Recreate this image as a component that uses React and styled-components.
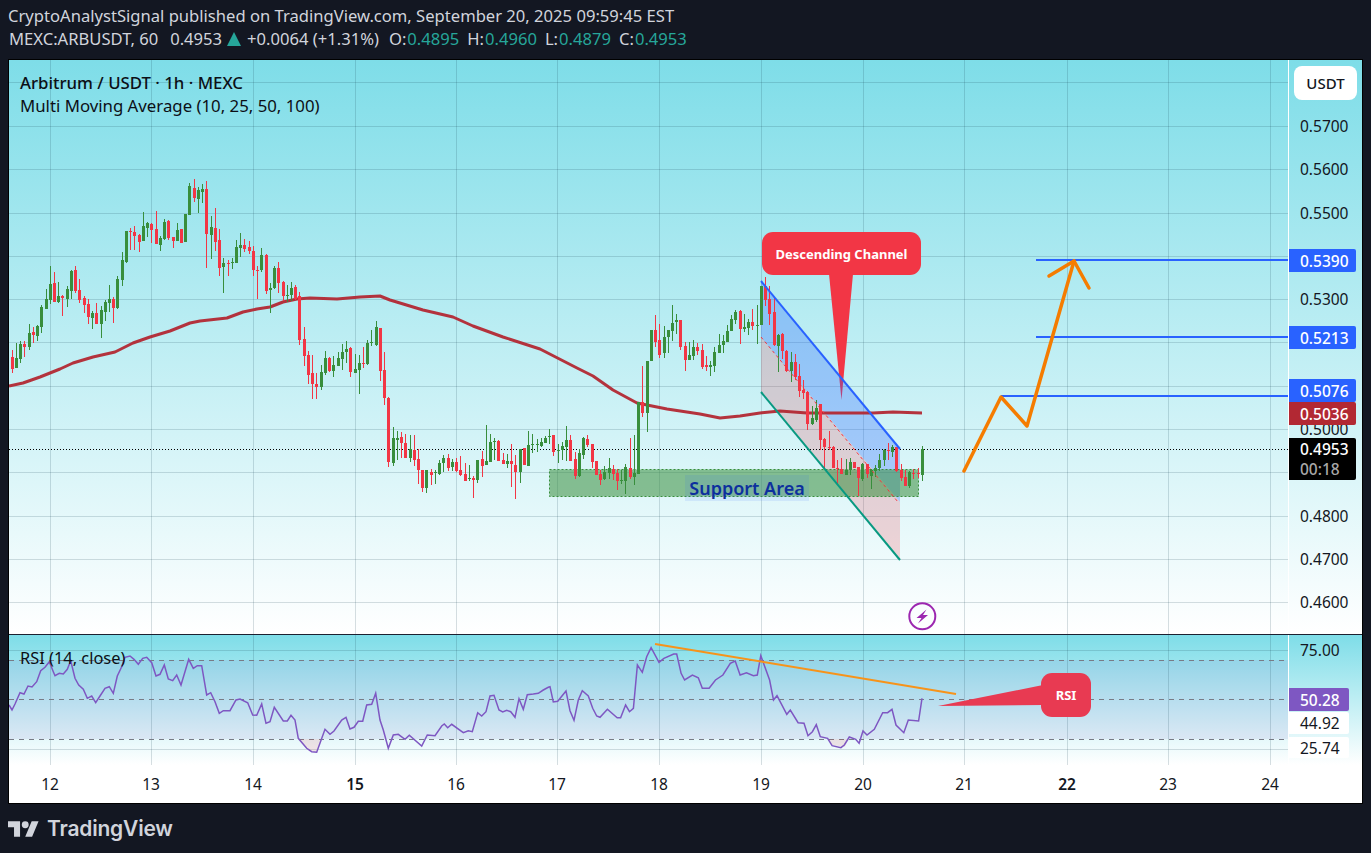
import React from "react";
import styled, { createGlobalStyle } from "styled-components";

const GlobalStyle = createGlobalStyle`
    html, body {
        margin: 0;
        padding: 0;
        background: #131722;
    }
    body {
        font-family: "Noto Sans", "Open Sans", sans-serif;
    }
`;

const Page = styled.div`
    width: 1371px;
    height: 853px;
    display: flex;
    flex-direction: column;
    background: #131722;
    overflow: hidden;
`;

const Header = styled.header`
    height: 59px;
    box-sizing: border-box;
    padding: 4px 0 0 8px;
    color: #d1d4dc;
    font-size: 16.6px;
    line-height: 23px;
    white-space: nowrap;
`;

const Line = styled.div`
    display: flex;
    align-items: center;
`;

const Value = styled.span`
    color: #26a69a;
    margin: 0 8px 0 1px;
`;

const Quote = styled.span`
    margin-left: ${(p) => p.$left || 0}px;
`;

const UpArrow = styled.span`
    width: 0;
    height: 0;
    margin: 0 6px 0 5px;
    border-left: 7px solid transparent;
    border-right: 7px solid transparent;
    border-bottom: 14px solid #26a69a;
`;

const Frame = styled.div`
    width: 1353px;
    margin-left: 8px;
    border: 1px solid #000;
    display: flex;
    flex-direction: column;
`;

const Pane = styled.div`
    height: ${(p) => p.$height}px;
    display: grid;
    grid-template-columns: 1279px 74px;
    background: linear-gradient(#7edde8, #ffffff);
`;

const PaneRule = styled.div`
    height: 1px;
    background: #1c2030;
`;

const ChartArea = styled.div`
    position: relative;
    overflow: hidden;
    svg {
        display: block;
    }
`;

const Axis = styled.div`
    position: relative;
    border-left: 1px solid #ffffff;
    box-sizing: border-box;
    color: #131722;
    font-size: 15.5px;
`;

const Legend = styled.div`
    position: absolute;
    top: ${(p) => p.$top}px;
    left: 11px;
    color: #0c0f16;
    font-size: ${(p) => p.$size || 16.8}px;
    line-height: 23px;
    white-space: nowrap;
`;

const LegendTitle = styled.div`
    font-weight: 500;
`;

const UnitButton = styled.div`
    position: absolute;
    top: 6px;
    left: 5px;
    width: 63px;
    height: 34px;
    display: flex;
    align-items: center;
    justify-content: center;
    background: #fff;
    border-radius: 8px;
    font-size: 15px;
    font-weight: 500;
`;

const Tick = styled.div`
    position: absolute;
    top: ${(p) => p.$y}px;
    left: 11px;
    transform: translateY(-50%);
`;

const Tag = styled.div`
    position: absolute;
    top: ${(p) => p.$top}px;
    left: 0;
    width: ${(p) => p.$width || 67}px;
    height: ${(p) => p.$height || 23}px;
    box-sizing: border-box;
    padding-left: 11px;
    display: flex;
    flex-direction: column;
    justify-content: center;
    border-radius: 0 2px 2px 0;
    background: ${(p) => p.$bg};
    color: ${(p) => p.$color || "#fff"};
    font-weight: ${(p) => (p.$color ? 400 : 500)};
    line-height: 20px;
`;

const Countdown = styled.span`
    color: #a8a8a8;
`;

const Callout = styled.div`
    position: absolute;
    left: ${(p) => p.$left}px;
    top: ${(p) => p.$top}px;
    width: ${(p) => p.$width}px;
    height: ${(p) => p.$height}px;
    display: flex;
    align-items: center;
    justify-content: center;
    border-radius: 11px;
    background: ${(p) => p.$bg};
    color: #fff;
    font-size: 13px;
    font-weight: 700;
`;

const ZoneLabel = styled.div`
    position: absolute;
    left: 676px;
    top: 415px;
    width: 124px;
    height: 26px;
    display: flex;
    align-items: center;
    justify-content: center;
    background: rgba(41, 98, 255, 0.1);
    color: #0d2f9e;
    font-size: 18px;
    font-weight: 600;
`;

const TimeRow = styled.div`
    height: 38px;
    display: grid;
    grid-template-columns: 1279px 74px;
    background: #fff;
`;

const TimeScale = styled.div`
    position: relative;
    color: #131722;
    font-size: 15.5px;
`;

const TimeLabel = styled.span`
    position: absolute;
    left: ${(p) => p.$x - 9}px;
    top: 50%;
    transform: translate(-50%, -50%);
    font-weight: ${(p) => (p.$strong ? 600 : 400)};
`;

const Footer = styled.footer`
    flex: 1;
    display: flex;
    align-items: center;
    gap: 8px;
    padding-left: 8px;
    color: #d1d4dc;
`;

const Wordmark = styled.span`
    font-family: Inter, "Noto Sans", sans-serif;
    font-size: 21px;
    font-weight: 600;
    letter-spacing: -0.2px;
`;

// bars are read off 3x crops: colour, x, high, body top, body bottom, low
const barsA = `
r37 540 561 597 608,g49 519 564 594 594,g61 514 522 567 579,r73 513 521 531 561,g88 462 489 531 540,r100 472 486 495 519,g112 465 468 498 513,g124 405 411 471 489
g139 357 387 417 417,g151 288 342 390 402,r163 306 339 396 396,g175 336 378 396 399,r187 375 378 384 438,g202 348 357 387 411,g214 300 303 363 387,r226 288 300 363 369
r238 327 360 390 399,r253 378 384 405 429,r265 387 402 441 462,g277 423 429 444 477,r289 399 429 462 462,g304 408 420 462 504,g316 390 396 426 453,g328 345 387 399 426
r340 381 387 414 459,g352 318 327 414 417,g367 246 270 330 348,g379 183 183 276 279,r391 174 183 186 240,r403 168 186 198 240,r418 192 195 216 246,g430 126 168 213 213
g442 156 159 174 201,r454 159 162 180 219,r469 123 177 222 222,g481 198 204 225 243,g493 147 156 207 210,r505 150 153 204 210,r520 201 201 213 234,g532 159 180 213 213
r544 177 177 219 219,g556 132 132 216 216,g568 39 48 135 135,r583 27 54 84 96,g595 51 60 87 129,g607 42 57 66 99,r619 33 57 192 294,g634 138 171 195 267
r646 114 174 216 243,r658 177 210 294 318,g670 264 279 291 369,r685 270 279 282 318,g697 264 276 279 297,g709 210 231 279 279,g721 189 225 234 261,r733 207 225 237 246
r748 213 231 243 252,r760 228 243 300 318,r772 288 300 303 387,g784 234 255 300 306,r799 252 255 363 372,g811 339 354 360 429,g823 288 294 354 357,r835 276 294 339 369
r850 333 336 378 393,g862 345 375 378 396,g874 336 354 375 393,r886 345 351 387 390,r898 366 378 510 525,r913 471 507 558 588,r925 543 555 615 642,r937 555 609 642 687
r949 609 642 651 687,g964 585 606 651 660,g976 543 564 609 615,r988 561 564 603 606,g1000 558 585 603 621,g1015 546 564 588 588,g1027 522 546 567 600,g1039 513 537 546 579
r1051 531 534 606 621,g1066 552 597 609 609,g1078 555 579 600 672,r1090 531 579 582 594,g1102 510 519 582 585,g1114 480 516 519 528,g1129 453 471 525 528,r1141 474 474 603 633
r1153 546 600 684 705,r1165 681 684 876 891,g1180 771 804 879 888,g1192 783 804 810 870`;

const barsB = `
r64 396 411 429 474,r76 402 429 474 474,g91 405 447 474 486,r103 405 450 480 498,r115 447 477 510 552,r127 510 510 564 576,g139 510 510 564 579,r154 507 516 525 555
g166 510 516 519 552,g178 480 489 522 525,g190 465 474 489 516,r205 462 474 504 513,g217 477 486 501 513,r229 474 486 513 516,r241 468 510 525 528,r256 489 522 543 543
g268 495 534 537 543,r280 528 534 540 594,g292 480 480 540 549,r307 453 477 498 531,g319 375 483 495 495,g331 402 426 486 486,g343 414 423 426 480,r355 420 423 483 483
r370 459 480 492 492,g382 462 483 492 504,r394 432 483 492 561,r406 465 495 516 597,g421 447 447 516 549,r433 444 444 495 495,g445 393 435 498 498,g457 402 432 435 459
g472 417 432 435 456,g484 414 426 438 441,g496 408 414 429 429,g508 387 408 411 432,r520 405 405 456 468,g535 432 450 453 489,g547 426 438 450 480,g559 378 420 441 483
r571 405 420 483 483,r586 456 477 528 537,g598 447 459 528 531,g610 411 414 465 477,r622 405 417 435 441,r637 432 432 486 504,r649 483 483 525 525,r661 510 522 540 555
g673 498 516 537 540,g688 474 504 519 537,r700 495 507 522 540,r712 507 519 543 570,g724 510 540 543 552,g736 492 501 543 582,r751 414 504 531 537,g763 405 519 531 555
g775 306 306 522 522,r787 198 306 339 351,g802 183 183 339 396,g814 90 90 183 183,r826 45 90 126 141,r838 72 120 165 174,g853 78 111 159 174,g865 90 90 111 159
g877 15 69 93 123,g889 42 60 66 102,r901 60 60 141 150,r916 126 138 180 213,g928 126 165 180 180,g940 120 141 168 180,r952 129 141 153 165,r967 132 150 201 207
r979 168 195 201 213,g991 183 195 201 228,g1003 141 156 198 216,g1018 102 135 159 159,g1030 105 123 135 159,g1042 75 93 126 126,g1054 45 57 93 93,g1066 30 36 60 72
r1081 30 33 87 132,g1093 42 81 87 96,g1105 57 66 84 105,r1117 27 66 78 90,g1132 15 75 78 132`;

const barsC = `
g64 198 198 315 315,r76 171 198 240 258,r88 198 237 282 315,r103 234 276 375 378,g115 342 345 378 456,r127 339 342 393 417,r139 390 393 453 456,g154 396 426 453 486
r166 402 426 471 480,r178 432 468 513 531,r190 480 510 519 537,r202 513 516 612 630,g217 558 594 612 615,g229 540 564 600 606,r241 552 552 660 690,r253 654 657 681 744
r268 633 681 684 690,r280 678 681 744 744,r292 720 744 747 795,r304 714 747 762 762,g319 717 750 765 765,g331 714 726 750 765,r343 726 726 744 744,r355 741 741 774 828
g367 729 732 777 783,r382 732 732 762 774,g394 747 750 768 807,g406 735 744 753 771,g418 702 720 744 753,g433 687 690 720 738,r445 669 690 693 720,g457 675 681 696 711
r469 681 681 753 756,r484 732 750 774 783,r496 750 771 798 798,g508 753 756 798 804,r520 747 759 762 777,r535 744 759 762 774,g547 678 687 765 783`;

const readBars = (text, left, top) =>
    text
        .trim()
        .split(/[,\n]/)
        .map((bar) => {
            const [x, high, bodyTop, bodyBottom, low] = bar.slice(1).split(" ").map(Number);
            return {
                up: bar[0] === "g",
                x: Math.round(left + x / 3),
                high: top + high / 3,
                top: top + bodyTop / 3,
                bottom: top + bodyBottom / 3,
                low: top + low / 3,
            };
        });

const BARS = [...readBars(barsA, 0, 170), ...readBars(barsB, 380, 300), ...readBars(barsC, 740, 220)];

const MA_LINE =
    "9,386 23,383 40,377 60,369 73,363 93,357 115,352 133,343 150,337 170,331 190,323 200,321 227,318 243,312 257,309 270,307 283,302 297,299 310,298 337,299 360,297 380,296 390,300 423,310 453,317 473,326 503,337 540,349 577,368 593,376 613,390 637,403 667,409 700,414 720,418 740,416 760,413 780,411 807,413 840,413 873,413 893,412 922,413";

const rsiA =
    "27,225 36,240 45,222 60,188 72,192 84,168 96,171 110,155 122,122 135,112 148,95 160,125 165,137 178,130 190,132 202,118 212,92 225,145 236,165 250,178 262,205 275,198 287,218 300,198 315,175 328,170 340,190 352,138 365,110 375,82 390,78 402,88 415,103 428,85 440,82 455,98 468,138 480,133 493,105 505,147 518,152 530,135 543,165 566,88 580,115 592,107 605,107 620,195 632,188 645,215 658,250 670,242 690,242 708,210 720,207 743,218 758,255 770,256 785,222 798,280 810,275 823,232 850,273 862,273 873,256 885,270 895,325 920,355 935,365 950,367 975,298 990,313 1002,303 1025,270 1038,262 1050,297 1062,292 1075,274 1088,274 1100,225 1115,223 1127,190 1140,270 1150,300 1165,355 1180,315 1195,313 1215,328 1228,316 1265,348 1282,315 1305,317 1325,288 1333,282 1343,293 1355,283 1390,308 1405,302 1417,305 1433,248 1445,258 1458,245 1470,198 1482,196 1497,240";
const rsiB =
    "68,216 80,211 92,215 105,232 117,176 130,208 142,164 160,162 175,160 190,150 205,142 210,140 220,186 233,184 258,153 270,212 282,241 295,180 307,152 325,168 338,205 350,228";
const rsiC =
    "0,262 15,238 35,263 42,263 52,225 60,245 68,235 76,105 86,127 95,80 104,53 120,97 130,85 150,72 156,72 165,130 172,150 188,135 200,143 208,175 222,175 235,150 250,135 265,100 275,93 285,135 298,128 312,137 320,135 327,77 345,150 353,210 360,197 380,253 387,240 403,278 415,280 423,317 432,305 440,284 448,320 463,325 472,347 490,353 497,345 507,321 520,328 527,340 535,303 543,315 558,298 575,248 585,248 594,238 602,285 618,308 627,270 648,273 655,205";

const readLine = (text, left, top, scaleX, scaleY) =>
    text
        .split(" ")
        .map((pair) => {
            const [x, y] = pair.split(",").map(Number);
            return `${(left + x / scaleX).toFixed(1)},${(top + y / scaleY).toFixed(1)}`;
        })
        .join(" ");

const RSI_LINE = [
    readLine(rsiA, 0, 630, 3, 3),
    readLine(rsiB, 480, 640, 3, 3),
    readLine(rsiC, 600, 630, 2.034, 3),
].join(" ");

const DAYS = [
    [12, 50],
    [13, 151],
    [14, 253],
    [15, 355, true],
    [16, 456],
    [17, 557],
    [18, 659],
    [19, 761],
    [20, 863],
    [21, 964],
    [22, 1067, true],
    [23, 1168],
    [24, 1270],
];

const GRID_LEVELS = [82, 126, 169, 213, 256, 299, 342, 386, 429, 472, 516, 559, 602];
const GRID = "rgba(20, 60, 80, 0.17)";

const PRICE_TICKS = [
    ["0.5700", 66],
    ["0.5600", 109],
    ["0.5500", 153],
    ["0.5300", 239],
    ["0.5000", 369],
    ["0.4800", 456],
    ["0.4700", 499],
    ["0.4600", 542],
];

function MainChart() {
    return (
        <svg width="1279" height="574" viewBox="9 60 1279 574">
            <g stroke={GRID} shapeRendering="crispEdges">
                {GRID_LEVELS.map((y) => (
                    <line key={y} x1="9" x2="1288" y1={y} y2={y} />
                ))}
                {DAYS.map(([day, x]) => (
                    <line key={day} x1={x} x2={x} y1="60" y2="634" />
                ))}
            </g>
            <path d="M829 274 L853 274 L841.5 400 Z" fill="#f23645" />
            <polygon points="761,337 900,502 900,560 761,392" fill="rgba(242,54,69,0.2)" />
            <polygon points="761,281 900,449 900,502 761,337" fill="rgba(41,98,255,0.3)" />
            <rect
                x="549.5"
                y="469.5"
                width="369"
                height="27"
                fill="rgba(56,142,60,0.55)"
                stroke="#388e3c"
                strokeDasharray="2 2"
            />
            <line x1="9" x2="1288" y1="449.5" y2="449.5" stroke="#000" strokeDasharray="1 2" />
            <polyline points={MA_LINE} fill="none" stroke="#b22833" strokeWidth="3" strokeLinejoin="round" opacity="0.95" />
            <g shapeRendering="crispEdges">
                {BARS.map((bar, i) => {
                    const color = bar.up ? "#388e3c" : "#f23645";
                    return (
                        <g key={i} fill={color}>
                            <rect x={bar.x} y={bar.high} width="1" height={bar.low - bar.high} />
                            <rect x={bar.x - 1} y={bar.top} width="3" height={Math.max(bar.bottom - bar.top, 1)} />
                        </g>
                    );
                })}
            </g>
            <line x1="761" y1="281" x2="900" y2="449" stroke="#2962ff" strokeWidth="2" />
            <line x1="761" y1="337" x2="898" y2="502" stroke="#f23645" strokeWidth="1" strokeDasharray="3 3" />
            <line x1="761" y1="392" x2="900" y2="560" stroke="#089981" strokeWidth="2" />
            <g stroke="#2962ff" strokeWidth="2">
                <line x1="1036" x2="1288" y1="260" y2="260" />
                <line x1="1036" x2="1288" y1="337" y2="337" />
                <line x1="1001" x2="1288" y1="396" y2="396" />
            </g>
            <g fill="none" stroke="#f57c00" strokeWidth="3.5" strokeLinecap="round" strokeLinejoin="round">
                <polyline points="964,471 1001,397 1027,426 1074,261" />
                <polyline points="1049,276 1074,261 1089,288" />
            </g>
            <circle cx="922.3" cy="616.3" r="13" fill="none" stroke="#9c27b0" strokeWidth="2" />
            <path d="M926.5 609.5 L916.5 618 L921.5 618 L918 623.5 L928 615 L923 615 Z" fill="#9c27b0" />
        </svg>
    );
}

function RsiChart() {
    return (
        <svg width="1279" height="130" viewBox="9 635 1279 130">
            <rect x="9" y="660" width="1279" height="79" fill="rgba(126,87,194,0.1)" />
            <g stroke={GRID} shapeRendering="crispEdges">
                <line x1="9" x2="1288" y1="650" y2="650" />
                <line x1="9" x2="1288" y1="749" y2="749" />
                {DAYS.map(([day, x]) => (
                    <line key={day} x1={x} x2={x} y1="635" y2="765" />
                ))}
            </g>
            <g stroke="#787b86" strokeDasharray="5 5" shapeRendering="crispEdges">
                <line x1="9" x2="1288" y1="660" y2="660" />
                <line x1="9" x2="1288" y1="699.5" y2="699.5" />
                <line x1="9" x2="1288" y1="739" y2="739" />
            </g>
            <polygon points="298,739 306,748 312,751.5 317,752 322,739" fill="rgba(242,54,69,0.12)" />
            <polygon points="828,739 832,745 845,747 848,739" fill="rgba(242,54,69,0.12)" />
            <polyline points={RSI_LINE} fill="none" stroke="#7e57c2" strokeWidth="1.5" />
            <line x1="655" y1="644" x2="956" y2="694" stroke="#f7931a" strokeWidth="2" />
            <path d="M938 706 L1043 685 L1043 705 Z" fill="#e83a52" />
        </svg>
    );
}

export default function App() {
    return (
        <Page>
            <GlobalStyle />
            <Header>
                <Line>CryptoAnalystSignal published on TradingView.com, September 20, 2025 09:59:45 EST</Line>
                <Line>
                    <Quote $left={1}>MEXC:ARBUSDT, 60</Quote>
                    <Quote $left={12}>0.4953</Quote>
                    <UpArrow />
                    <span>+0.0064 (+1.31%)</span>
                    <Quote $left={10}>O:</Quote>
                    <Value>0.4895</Value>
                    <span>H:</span>
                    <Value>0.4960</Value>
                    <span>L:</span>
                    <Value>0.4879</Value>
                    <span>C:</span>
                    <Value>0.4953</Value>
                </Line>
            </Header>
            <Frame>
                <Pane $height={574}>
                    <ChartArea>
                        <MainChart />
                        <Legend $top={11}>
                            <LegendTitle>Arbitrum / USDT · 1h · MEXC</LegendTitle>
                            <div>Multi Moving Average (10, 25, 50, 100)</div>
                        </Legend>
                        <Callout $left={753} $top={172} $width={159} $height={43} $bg="#f23645">
                            Descending Channel
                        </Callout>
                        <ZoneLabel>Support Area</ZoneLabel>
                    </ChartArea>
                    <Axis>
                        <UnitButton>USDT</UnitButton>
                        {PRICE_TICKS.map(([label, y]) => (
                            <Tick key={label} $y={y}>
                                {label}
                            </Tick>
                        ))}
                        <Tag $top={189} $bg="#2962ff">0.5390</Tag>
                        <Tag $top={266} $bg="#2962ff">0.5213</Tag>
                        <Tag $top={319} $bg="#2962ff">0.5076</Tag>
                        <Tag $top={342} $bg="#b22833">0.5036</Tag>
                        <Tag $top={378} $height={42} $bg="#000">
                            <span>0.4953</span>
                            <Countdown>00:18</Countdown>
                        </Tag>
                    </Axis>
                </Pane>
                <PaneRule />
                <Pane $height={130}>
                    <ChartArea>
                        <RsiChart />
                        <Legend $top={11} $size={16.4}>RSI (14, close)</Legend>
                        <Callout $left={1032} $top={38} $width={50} $height={44} $bg="#e83a52">
                            RSI
                        </Callout>
                    </ChartArea>
                    <Axis>
                        <Tick $y={15}>75.00</Tick>
                        <Tag $top={53} $width={60} $bg="#7e57c2">50.28</Tag>
                        <Tag $top={77} $width={60} $height={22} $bg="#fff" $color="#131722">44.92</Tag>
                        <Tag $top={102} $width={60} $height={21} $bg="#fff" $color="#131722">25.74</Tag>
                    </Axis>
                </Pane>
                <TimeRow>
                    <TimeScale>
                        {DAYS.map(([day, x, strong]) => (
                            <TimeLabel key={day} $x={x} $strong={strong}>
                                {day}
                            </TimeLabel>
                        ))}
                    </TimeScale>
                </TimeRow>
            </Frame>
            <Footer>
                <svg width="31" height="16" viewBox="0 4 36 18" fill="#d1d4dc">
                    <path d="M14 22H7V11H0V4h14v18zM28 22h-8l7.5-18h8L28 22z" />
                    <circle cx="20" cy="8" r="4" />
                </svg>
                <Wordmark>TradingView</Wordmark>
            </Footer>
        </Page>
    );
}
